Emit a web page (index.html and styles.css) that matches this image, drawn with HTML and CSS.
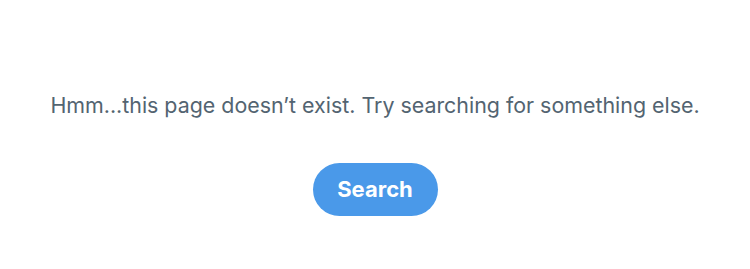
FILE: index.html
```html
<!DOCTYPE html>
<html>
<head>
<meta charset="utf-8">
<link rel="stylesheet" href="styles.css">
</head>
<body>
<main class="page">
  <p class="message">Hmm...this page doesn’t exist. Try searching for something else.</p>
  <button class="search-btn">Search</button>
</main>
</body>
</html>
```
FILE: styles.css
```css
html, body {
  margin: 0;
  padding: 0;
  background: #ffffff;
}
.page {
  display: flex;
  flex-direction: column;
  align-items: center;
  padding-top: 90px;
  font-family: Inter, "Noto Sans", sans-serif;
}
.message {
  margin: 0;
  font-size: 21.4px;
  line-height: 30px;
  color: #536471;
  white-space: nowrap;
}
.search-btn {
  margin-top: 43px;
  width: 125px;
  height: 53px;
  border: none;
  border-radius: 27px;
  background: #4a99e9;
  color: #ffffff;
  font-family: Inter, "Noto Sans", sans-serif;
  font-weight: 700;
  font-size: 22px;
  line-height: 53px;
  padding: 0 0 2px 0;
}
```
